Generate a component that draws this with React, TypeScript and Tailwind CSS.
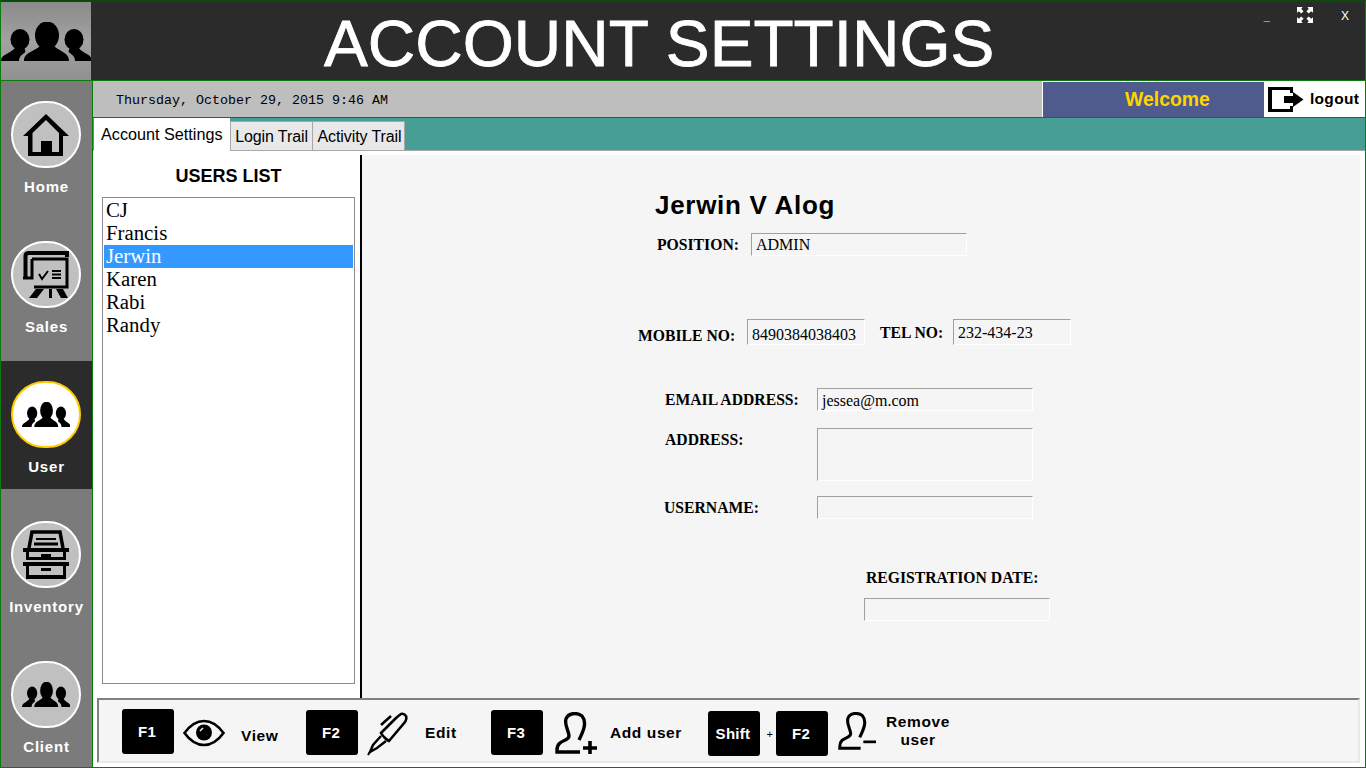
import React from "react";

const sans = "font-['Liberation_Sans',Arial,sans-serif]";
const serif = "font-['Liberation_Serif','Times_New_Roman',serif]";

function People({ className }: { className?: string }) {
  return (
    <svg viewBox="0 0 90 39" preserveAspectRatio="none" className={className} fill="#000">
      <ellipse cx="46" cy="13.500" rx="12" ry="14" />
      <path d="M23 39C23 30 33 30 39 24L53 24C59 30 68 30 68 39Z" />
      <ellipse cx="19" cy="17.500" rx="9.500" ry="10.500" />
      <path d="M0 39C0 32 9 32 14 26L23 26C25 29 25 30 22 32C19 34 18 36 18 39Z" />
      <ellipse cx="73" cy="17.500" rx="9.500" ry="10.500" />
      <path d="M91 39C91 32 82 32 78 26L69 26C67 29 67 30 70 32C73 34 74 36 74 39Z" />
    </svg>
  );
}

function HomeIcon() {
  return (
    <svg viewBox="0 0 46 42" className="w-[46px] h-[42px]" fill="#000">
      <path
        fillRule="evenodd"
        d="M23 0L46 22H40V42H5V22H0ZM23 6L9.500 19V38H18V27H29V38H36V19Z"
      />
    </svg>
  );
}

function SalesIcon() {
  return (
    <svg viewBox="0 0 46 47" className="w-[46px] h-[47px]" fill="none" stroke="#000">
      <path strokeWidth="4" d="M2.500 27V5Q2.500 2 6 2H44V6" />
      <path strokeWidth="3" d="M0 27H9V8" />
      <path strokeWidth="3" d="M9 8H44V36H11" />
      <path strokeWidth="2" d="M16 23L19 28L25 20" />
      <path strokeWidth="2" d="M29 20H38M29 23.500H38M29 27H38" />
      <path fill="#000" stroke="none" d="M13 38H21L14 47H6Z" />
      <path fill="#000" stroke="none" d="M26 38H29V47H26Z" />
      <path fill="#000" stroke="none" d="M33 38H40L45 47H38Z" />
    </svg>
  );
}

function InventoryIcon() {
  return (
    <svg viewBox="0 0 46 49" className="w-[46px] h-[49px]" fill="none" stroke="#000">
      <path strokeWidth="3.500" d="M6 18L9 2H37L40 18" />
      <path strokeWidth="2" d="M13 9H33" />
      <path strokeWidth="3" d="M11 14H35" />
      <path fill="#000" stroke="none" fillRule="evenodd" d="M0 18H46V22H43V30H3V22H0ZM6 22V27H40V22Z" />
      <path fill="#000" stroke="none" d="M18 24H28V27H18Z" />
      <path fill="#000" stroke="none" fillRule="evenodd" d="M0 32H46V36H43V49H3V36H0ZM6 36V45H40V36Z" />
      <path fill="#000" stroke="none" d="M18 38H28V41H18Z" />
    </svg>
  );
}

function EyeIcon() {
  return (
    <svg viewBox="0 0 42 28" className="w-[42px] h-[28px]" fill="none" stroke="#000">
      <path strokeWidth="2.600" d="M1.500 14C8 5 14 2 21 2S34 5 40.500 14C34 23 28 26 21 26S8 23 1.500 14Z" />
      <circle cx="21" cy="13.500" r="8" fill="#000" stroke="none" />
      <path d="M17 12L20 9" stroke="#f5f5f5" strokeWidth="1.400" />
    </svg>
  );
}

function PenIcon() {
  return (
    <svg viewBox="0 0 44 44" className="w-[44px] h-[44px]" fill="none" stroke="#000">
      <path strokeWidth="2.600" d="M16 21L30 7Q33 4 36 2Q39 1 41 4Q42 7 40 10L24 29Q22 28 20 26Q17 23 16 21Z" />
      <path strokeWidth="2.600" d="M26 4L16 13" />
      <path strokeWidth="2.400" d="M16 24L8 33L5 40L12 36L21 29" />
      <path strokeWidth="2" d="M3 43L5 40" />
    </svg>
  );
}

function UserGlyph({ sign, className }: { sign: "plus" | "minus"; className: string }) {
  return (
    <svg viewBox="0 0 42 42" className={className} fill="none" stroke="#000">
      <path
        strokeWidth="3.400"
        d="M24 28C29 18 32 10 27 4C22 0 13 1 11 7C9 13 14 19 14 24C14 30 2 27 2 38V40H25"
      />
      {sign === "plus" ? (
        <path strokeWidth="3.600" d="M28 36H42M35 29V42" />
      ) : (
        <path strokeWidth="3" d="M28 33H42" />
      )}
    </svg>
  );
}

function LogoutIcon() {
  return (
    <svg viewBox="0 0 36 27" className="w-[36px] h-[27px] shrink-0" fill="#000">
      <path d="M0 1H25V7H22V4H4V23H22V20H25V26H0Z" />
      <path d="M16 10H25V6L35.500 13.500L25 21V17H16Z" />
    </svg>
  );
}

function FullscreenIcon() {
  return (
    <svg viewBox="0 0 17 17" className="w-[16px] h-[16px]" fill="#fff">
      <path d="M0 0H6L4.500 2L7 4.500L4.500 7L2 4.500L0 6Z" />
      <path d="M17 0H11L12.500 2L10 4.500L12.500 7L15 4.500L17 6Z" />
      <path d="M0 17H6L4.500 15L7 12.500L4.500 10L2 12.500L0 11Z" />
      <path d="M17 17H11L12.500 15L10 12.500L12.500 10L15 12.500L17 11Z" />
    </svg>
  );
}

const navItems = [
  { label: "Home", icon: <HomeIcon /> },
  { label: "Sales", icon: <SalesIcon /> },
  { label: "User", icon: <People className="w-[48px] h-[25px]" />, active: true },
  { label: "Inventory", icon: <InventoryIcon /> },
  { label: "Client", icon: <People className="w-[48px] h-[25px]" /> },
];

const users = ["CJ", "Francis", "Jerwin", "Karen", "Rabi", "Randy"];

function Field({ className, children }: { className: string; children?: React.ReactNode }) {
  return (
    <div
      className={`${className} ${serif} shrink-0 border border-t-[#a0a0a0] border-l-[#a0a0a0] border-r-white border-b-white pl-1 text-[16px] text-black`}
    >
      {children}
    </div>
  );
}

function Label({ className, children }: { className?: string; children: React.ReactNode }) {
  return <div className={`${serif} ${className ?? ""} shrink-0 text-[15.700px] font-bold leading-[18px] text-black whitespace-nowrap`}>{children}</div>;
}

function Key({ label, className }: { label: string; className: string }) {
  return (
    <div
      className={`${className} w-[52px] h-[45px] shrink-0 flex items-center justify-center pr-[2px] pt-[2px] rounded-[3px] bg-black text-white text-[15px] font-bold tracking-[0.3px]`}
    >
      {label}
    </div>
  );
}

export default function App() {
  return (
    <div className={`${sans} w-[1366px] h-[768px] overflow-hidden flex flex-col bg-white border-x border-x-[#0a7a0a] border-t-2 border-t-[#0a4a0a] border-b border-b-[#0a7a0a]`}>
      {/* title bar */}
      <header className="h-[78px] shrink-0 flex bg-[#2b2b2b]">
        <div className="w-[90px] shrink-0 flex items-end pb-[19px] bg-gradient-to-b from-[#8a8a8a] via-[#a2a2a2] to-[#909090]">
          <People className="w-[90px] h-[39px]" />
        </div>
        <h1 className="ml-[233px] mt-[5px] text-[65.700px] leading-[74px] font-normal text-white whitespace-nowrap [-webkit-text-stroke:0.8px_white]">
          ACCOUNT SETTINGS
        </h1>
        <div className="ml-auto flex items-start text-white">
          <span className="text-[11px] mt-[6px] mr-[27px] font-bold">_</span>
          <div className="mt-[5px] mr-[28px]">
            <FullscreenIcon />
          </div>
          <span className="text-[12px] mt-[5px] mr-[16px]">X</span>
        </div>
      </header>
      <div className="h-[1px] shrink-0 bg-[#0a7a0a]" />

      <div className="flex-1 flex min-h-0">
        {/* left nav */}
        <nav className="w-[91px] shrink-0 flex flex-col bg-[#7b7b7b]">
          {navItems.map((item) => (
            <div
              key={item.label}
              className={`shrink-0 flex flex-col items-center pt-[20px] ${item.active ? "bg-[#2b2b2b] h-[128px] mb-[12px]" : "h-[140px]"}`}
            >
              <div
                className={`w-[70px] h-[67px] mr-[1px] rounded-full border-2 flex items-center justify-center ${
                  item.active ? "bg-white border-[#ffcc00]" : "bg-[#c0c0c0] border-white"
                }`}
              >
                {item.icon}
              </div>
              <span className="mt-[10px] text-[15px] leading-[18px] font-bold tracking-[0.8px] text-white">{item.label}</span>
            </div>
          ))}
        </nav>
        <div className="w-[1px] shrink-0 bg-[#0a7a0a]" />

        <main className="flex-1 min-w-0 flex flex-col">
          {/* status row */}
          <div className="h-[36px] shrink-0 flex bg-[#bebebe]">
            <div className="flex-1 pl-[23px] pt-[12px] font-['Liberation_Mono',monospace] text-[13.330px] leading-[16px] text-black">
              Thursday, October 29, 2015 9:46 AM
            </div>
            <div className="w-[222px] flex items-center justify-center pl-[28px] border-l border-l-white border-t border-t-white bg-[#4f5b8c] text-[#ffd400] text-[19.400px] font-bold">
              Welcome
            </div>
            <div className="w-[101px] flex items-center bg-white pl-[4px] gap-[6px] text-[15.500px] tracking-[0.3px] font-bold text-black">
              <LogoutIcon />
              <span>logout</span>
            </div>
          </div>
          <div className="h-[1px] shrink-0 bg-[#0a7a0a]" />

          {/* tabs */}
          <div className="h-[33px] shrink-0 flex items-end bg-[#479e95] border-b border-b-[#a8a8a8] pl-[1px]">
            <div className="w-[136px] h-[33px] -mb-[1px] bg-white text-[16.200px] pt-[4px] pl-[7px] text-black">Account Settings</div>
            <div className="w-[83px] h-[30px] -mb-[1px] bg-[#e8e8e8] border border-[#a8a8a8] text-[16px] tracking-[-0.1px] text-center leading-[29px] text-black">Login Trail</div>
            <div className="w-[92px] h-[30px] -mb-[1px] pl-[2px] bg-[#e8e8e8] border border-[#a8a8a8] border-l-0 text-[16px] tracking-[-0.1px] text-center leading-[29px] text-black">Activity Trail</div>
          </div>

          <div className="flex-1 min-h-0 flex flex-col bg-white pt-[4px] pr-[5px] pb-[4px]">
            <div className="flex-1 min-h-0 flex">
              {/* users list */}
              <section className="w-[267px] shrink-0 flex flex-col pl-[9px] pr-[5px] pb-[14px]">
                <h2 className="text-center text-[18px] leading-[20px] font-bold mt-[11px] mb-[11px] text-black">USERS LIST</h2>
                <ul className={`${serif} flex-1 border border-[#8a8a90] p-[1px] text-[20.800px] text-black`}>
                  {users.map((name) => (
                    <li key={name} className={`pl-[2px] h-[23px] leading-[21px] ${name === "Jerwin" ? "bg-[#3399ff] text-white" : ""}`}>
                      {name}
                    </li>
                  ))}
                </ul>
              </section>
              <div className="w-[2px] shrink-0 bg-black" />

              {/* user details */}
              <section className="flex-1 min-w-0 bg-[#f5f5f5] flex flex-col">
                <div className="ml-[293px] mt-[36px] text-[26px] leading-[28px] font-bold tracking-[0.7px] text-black whitespace-nowrap">
                  Jerwin V Alog
                </div>
                <div className="ml-[295px] mt-[14px] flex items-center">
                  <Label className="w-[94px]">POSITION:</Label>
                  <Field className="w-[216px] h-[23px] leading-[21px]">ADMIN</Field>
                </div>
                <div className="ml-[276px] mt-[63px] flex items-start">
                  <Label className="w-[109px] mt-[8px]">MOBILE NO:</Label>
                  <Field className="w-[118px] h-[26px] leading-[30px]">8490384038403</Field>
                  <Label className="ml-[15px] w-[73px] mt-[5px]">TEL NO:</Label>
                  <Field className="w-[118px] h-[26px] leading-[25px]">232-434-23</Field>
                </div>
                <div className="ml-[303px] mt-[43px] flex items-start">
                  <Label className="w-[152px] mt-[3px]">EMAIL ADDRESS:</Label>
                  <Field className="w-[216px] h-[23px] leading-[24px]">jessea@m.com</Field>
                </div>
                <div className="ml-[303px] mt-[17px] flex items-start">
                  <Label className="w-[152px] mt-[3px]">ADDRESS:</Label>
                  <Field className="w-[216px] h-[53px]" />
                </div>
                <div className="ml-[302px] mt-[15px] flex items-start">
                  <Label className="w-[153px] mt-[3px]">USERNAME:</Label>
                  <Field className="w-[216px] h-[23px]" />
                </div>
                <Label className="ml-[504px] mt-[50px]">REGISTRATION DATE:</Label>
                <Field className="ml-[502px] mt-[11px] w-[186px] h-[23px]" />
              </section>
            </div>

            {/* shortcut bar */}
            <footer className="h-[65px] shrink-0 ml-[4px] flex items-start border-2 border-b-[#e8e8e8] border-r-[#e8e8e8] border-t-[#808080] border-l-[#808080] bg-[#f5f5f5] text-black text-[15.500px] font-bold tracking-[0.6px]">
              <Key label="F1" className="ml-[23px] mt-[9px]" />
              <div className="ml-[9px] mt-[19px]"><EyeIcon /></div>
              <span className="ml-[16px] w-[38px] mt-[27px] leading-[18px]">View</span>
              <Key label="F2" className="ml-[27px] mt-[10px]" />
              <div className="ml-[7px] mt-[12px]"><PenIcon /></div>
              <span className="ml-[16px] w-[31px] mt-[24px] leading-[18px]">Edit</span>
              <Key label="F3" className="ml-[35px] mt-[10px]" />
              <div className="ml-[12px] mt-[12px]"><UserGlyph sign="plus" className="w-[42px] h-[42px]" /></div>
              <span className="ml-[13px] w-[72px] mt-[24px] leading-[18px] whitespace-nowrap">Add user</span>
              <Key label="Shift" className="ml-[26px] mt-[11px]" />
              <span className="ml-[4px] mt-[26px] text-[11px] font-normal w-[12px] text-center">+</span>
              <Key label="F2" className="mt-[11px]" />
              <div className="ml-[10px] mt-[12px]"><UserGlyph sign="minus" className="w-[38px] h-[38px]" /></div>
              <span className="ml-[9px] w-[66px] mt-[13px] leading-[18px] text-center">
                Remove
                <br />
                user
              </span>
            </footer>
          </div>
        </main>
      </div>
    </div>
  );
}
